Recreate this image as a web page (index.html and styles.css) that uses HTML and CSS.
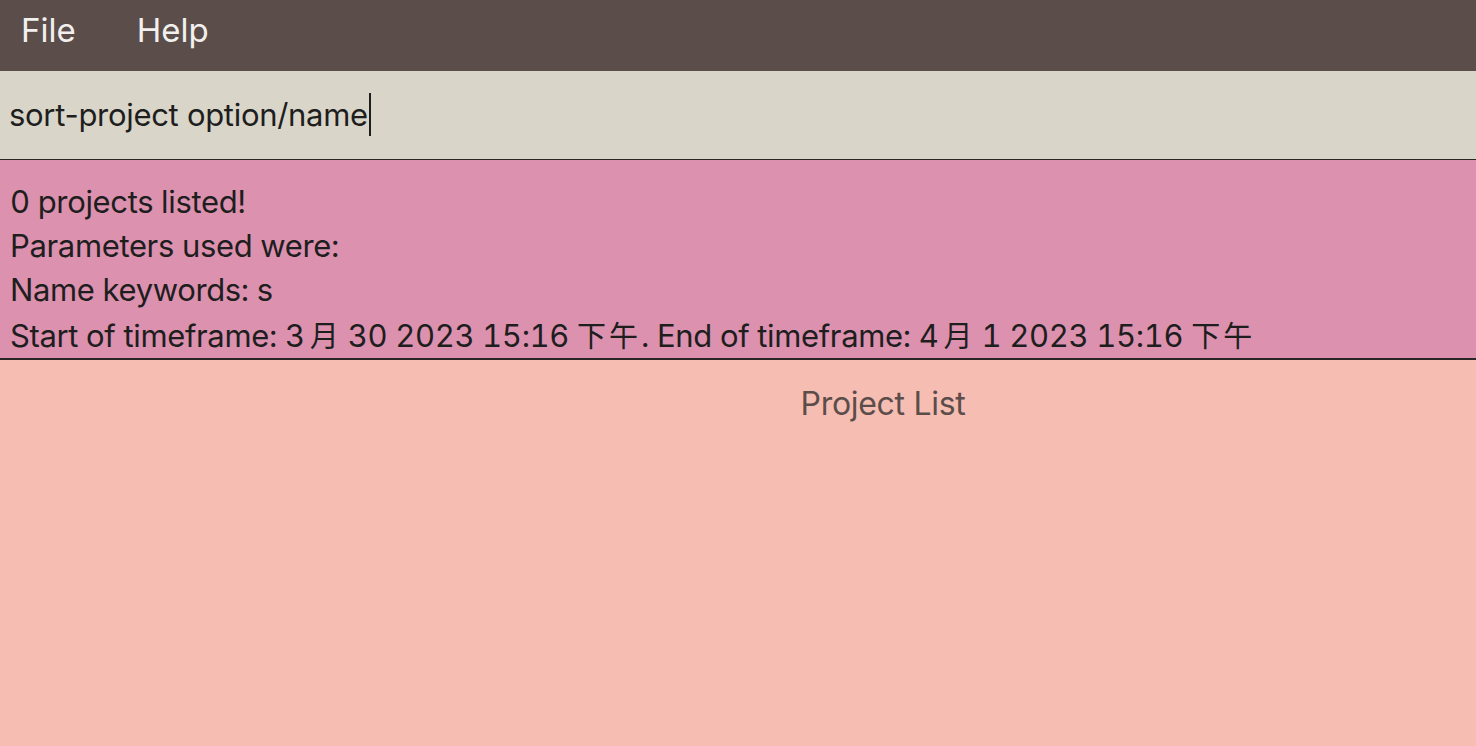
FILE: index.html
```html
<!DOCTYPE html>
<html>
<head>
<meta charset="utf-8">
<link rel="stylesheet" href="styles.css">
</head>
<body>
<div class="app">
  <div class="menubar">
    <span class="menu-item">File</span>
    <span class="menu-item">Help</span>
  </div>
  <div class="command">
    <span class="command-text">sort-project option/name</span><span class="caret"></span>
  </div>
  <div class="result">
    <div>0 projects listed!</div>
    <div>Parameters used were:</div>
    <div>Name keywords: s</div>
    <div>Start of timeframe: 3<span class="cjk cjk-month">月</span> 30 2023 15:16 <span class="cjk cjk-ampm">下午</span>. End of timeframe: 4<span class="cjk cjk-month">月</span> 1 2023 15:16 <span class="cjk cjk-ampm">下午</span></div>
  </div>
  <div class="list">
    <div class="list-title">Project List</div>
  </div>
</div>
</body>
</html>
```
FILE: styles.css
```css
html, body {
  margin: 0;
  padding: 0;
  height: 100%;
}
body {
  font-family: Inter, "Noto Sans CJK SC", sans-serif;
  background: #f6bdb3;
}
.app {
  display: flex;
  flex-direction: column;
  height: 746px;
}
.menubar {
  height: 71px;
  background: #5b4d4a;
  display: flex;
  align-items: center;
  padding-left: 21px;
  gap: 61px;
  box-sizing: border-box;
}
.menu-item {
  color: #f2f0ee;
  font-size: 33px;
  line-height: 1;
  padding-bottom: 10px;
}
.command {
  height: 89px;
  background: #d9d5c9;
  border-bottom: 1px solid #2b2626;
  display: flex;
  align-items: center;
  padding-left: 9px;
  padding-bottom: 1px;
  box-sizing: border-box;
}
.command-text {
  font-size: 31px;
  color: #1e1e1e;
  letter-spacing: -0.3px;
}
.caret {
  display: inline-block;
  width: 2px;
  height: 43px;
  background: #1e1e1e;
  margin-left: 1px;
}
.result {
  height: 200px;
  background: #dc91af;
  border-bottom: 2px solid #2b2626;
  box-sizing: border-box;
  padding: 20px 0 0 10px;
  font-size: 31px;
  line-height: 44px;
  color: #1e1e1e;
  letter-spacing: -0.35px;
  font-variant-numeric: tabular-nums;
}
.cjk {
  font-family: "Noto Sans CJK SC", sans-serif;
  font-size: 29px;
}
.cjk-month {
  margin-left: 5px;
  letter-spacing: 1px;
}
.cjk-ampm {
  letter-spacing: 3px;
}
.list {
  flex: 1;
  background: #f6bdb3;
  display: flex;
  flex-direction: column;
  align-items: center;
}
.list-title {
  padding-left: 290px;
  margin-top: 24px;
  font-size: 32px;
  color: #5b4d4a;
  letter-spacing: -0.3px;
}
```
